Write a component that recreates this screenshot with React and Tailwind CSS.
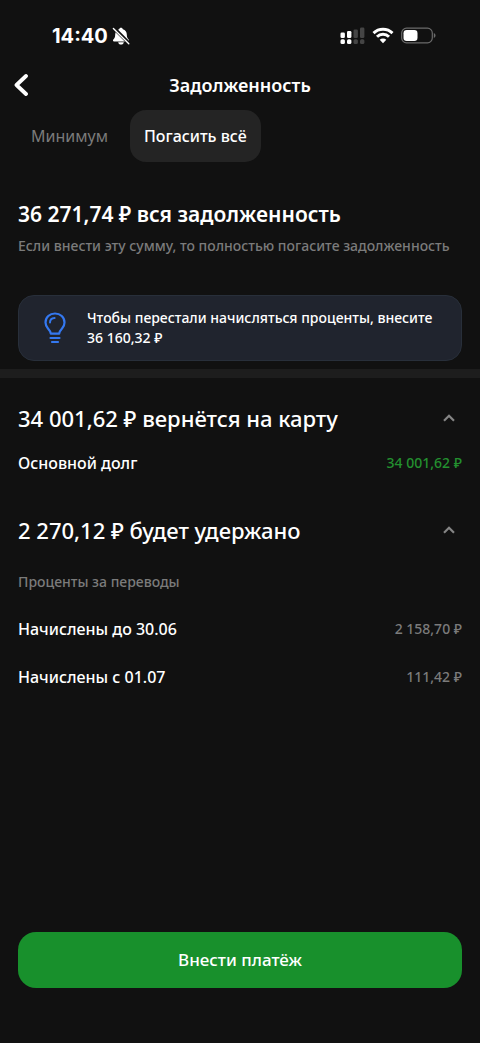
import { useState } from "react";

function Bell() {
  return (
    <svg width="18" height="18" viewBox="0 0 18 18" aria-hidden="true">
      <path d="M9 .8c-1 0-1.700.6-1.900 1.500C4.600 3.100 3.200 5.100 3.200 7.600c0 3-.9 3.900-1.900 5-.7.8-.3 1.900.7 1.900h14c1 0 1.400-1.100.7-1.900-1-1.100-1.900-2-1.900-5 0-2.500-1.400-4.500-3.900-5.300C10.700 1.400 10 .8 9 .8z" fill="#fff" />
      <path d="M6.200 15.200h5.600c-.2 1.400-1.400 2.300-2.800 2.300s-2.600-.9-2.800-2.300z" fill="#fff" />
      <path d="M2 1.200 17 16.200" stroke="#111" strokeWidth="3.600" />
      <path d="M1.400 1.400 16.800 16.800" stroke="#fff" strokeWidth="1.400" strokeLinecap="round" />
    </svg>
  );
}

function Signal() {
  return (
    <svg width="25" height="18" viewBox="0 0 25 18" aria-hidden="true">
      <g fill="#fff">
        <rect x="0.500" y="5.500" width="4.400" height="5.500" rx="1.300" />
        <rect x="7" y="4" width="4.400" height="7" rx="1.300" />
        <rect x="0.500" y="12.300" width="4.400" height="4.700" rx="1.500" />
        <rect x="7" y="12.300" width="4.400" height="4.700" rx="1.500" />
      </g>
      <g fill="#454545">
        <rect x="13.500" y="2.500" width="4.400" height="8.500" rx="1.300" />
        <rect x="20" y="0.500" width="4.400" height="10.500" rx="1.300" />
        <rect x="13.500" y="12.300" width="4.400" height="4.700" rx="1.500" />
        <rect x="20" y="12.300" width="4.400" height="4.700" rx="1.500" />
      </g>
    </svg>
  );
}

function Wifi() {
  return (
    <svg width="22" height="18" viewBox="0 0 22 18" aria-hidden="true">
      <g fill="none" stroke="#fff" strokeWidth="2.900">
        <path d="M1.500 6.100a13.500 13.500 0 0 1 19 0" />
        <path d="M5 9.800a8.500 8.500 0 0 1 12 0" />
      </g>
      <path d="M7.700 12.800a4.700 4.700 0 0 1 6.600 0L11 16.200z" fill="#fff" />
    </svg>
  );
}

function Battery() {
  return (
    <svg width="35" height="18" viewBox="0 0 35 18" aria-hidden="true">
      <rect x="0.700" y="1.200" width="30.600" height="14.600" rx="4.800" fill="none" stroke="#6b6b6b" strokeWidth="1.200" />
      <rect x="2.500" y="3" width="14" height="11" rx="3.200" fill="#fff" />
      <path d="M32.800 6c1.100.4 1.700 1.400 1.700 2.500s-.6 2.100-1.700 2.500z" fill="#6b6b6b" />
    </svg>
  );
}

function Bulb() {
  return (
    <svg width="22" height="32" viewBox="0 0 22 32" fill="none" stroke="#3478f0" strokeLinecap="round" strokeLinejoin="round" aria-hidden="true">
      <path d="M6.800 21.600c-.3-2.300-1.500-3.700-3-5.400A9.400 9.400 0 0 1 1.500 10.400C1.500 5.300 5.700 1.500 11 1.500s9.500 3.800 9.500 8.900c0 2.300-.9 4.200-2.300 5.800-1.500 1.700-2.700 3.100-3 5.400z" strokeWidth="2.200" />
      <path d="M6 10.600C6 8 7.800 6.200 10.600 6" strokeWidth="2" />
      <path d="M6.500 26h9M8 30h6" strokeWidth="2.200" />
    </svg>
  );
}

function Section({ title, children }) {
  const [open, setOpen] = useState(true);
  return (
    <section>
      <h2>
        <button
          type="button"
          aria-expanded={open}
          onClick={() => setOpen(!open)}
          className="flex h-8 w-full items-center justify-between pr-[7px] text-left text-[22px] font-medium"
        >
          {title}
          <svg width="12" height="12" viewBox="0 0 12 12" className={open ? "" : "rotate-180"} aria-hidden="true">
            <path d="M1 8.700 6 3.700l5 5" fill="none" stroke="#858585" strokeWidth="2.200" />
          </svg>
        </button>
      </h2>
      {open && children}
    </section>
  );
}

function Row({ label, value, green }) {
  return (
    <div className="flex h-12 items-center justify-between">
      <dt className="text-base font-medium">{label}</dt>
      <dd className={green ? "text-sm font-medium text-[#23902f]" : "text-sm font-medium text-[#7b7b7b]"}>{value}</dd>
    </div>
  );
}

export default function App() {
  const [tab, setTab] = useState("all");
  const tabClass = (id) =>
    tab === id
      ? "h-[52px] rounded-2xl bg-[#242424] px-[14px] text-base font-medium text-white"
      : "h-[52px] rounded-2xl px-[13px] text-base text-[#7b7b7b]";

  return (
    <div className="flex min-h-screen flex-col bg-[#111] font-['Noto_Sans',sans-serif] text-white">
      <div className="flex h-[69px] items-center justify-between pt-[3px] pr-11 pl-[52px]">
        <div className="flex items-center gap-1">
          <time className="font-['Inter',sans-serif] text-xl font-bold">14:40</time>
          <Bell />
        </div>
        <div className="flex items-center gap-[7px]">
          <Signal />
          <Wifi />
          <Battery />
        </div>
      </div>

      <header className="grid h-[41px] grid-cols-[40px_1fr_40px] items-start">
        <button type="button" aria-label="Назад" className="flex h-8 items-center pl-[14px]">
          <svg width="14" height="22" viewBox="0 0 14 22" aria-hidden="true">
            <path d="M12 2 2.500 11l9.500 9" fill="none" stroke="#fff" strokeWidth="3.800" strokeLinecap="round" strokeLinejoin="round" />
          </svg>
        </button>
        <h1 className="text-center text-lg leading-8 font-semibold">Задолженность</h1>
      </header>

      <div role="tablist" className="flex gap-[9px] px-[18px]">
        <button type="button" role="tab" aria-selected={tab === "min"} onClick={() => setTab("min")} className={tabClass("min")}>
          Минимум
        </button>
        <button type="button" role="tab" aria-selected={tab === "all"} onClick={() => setTab("all")} className={tabClass("all")}>
          Погасить всё
        </button>
      </div>

      <main className="flex grow flex-col">
        <div className="px-[18px] pt-9">
          <h2 className="text-[21px] leading-8 font-semibold">36 271,74 ₽ вся задолженность</h2>
          <p className="pt-1 text-sm leading-6 font-medium text-[#7b7b7b]">
            Если внести эту сумму, то полностью погасите задолженность
          </p>
          <div className="mt-[37px] flex items-center gap-[21px] rounded-2xl border border-[#282f3a] bg-[#20242e] py-3 pl-[25px]">
            <Bulb />
            <p className="text-sm leading-5 font-medium">
              Чтобы перестали начисляться проценты, внесите
              <br />
              36 160,32 ₽
            </p>
          </div>
        </div>

        <div className="mt-2 h-[9px] bg-[#1d1d1d]" />

        <div className="flex flex-col gap-[27px] px-[18px] pt-6">
          <Section title="34 001,62 ₽ вернётся на карту">
            <dl className="pt-[5px]">
              <Row label="Основной долг" value="34 001,62 ₽" green />
            </dl>
          </Section>
          <Section title="2 270,12 ₽ будет удержано">
            <h3 className="pt-6 text-sm leading-6 font-medium text-[#7b7b7b]">Проценты за переводы</h3>
            <dl className="pt-[11px]">
              <Row label="Начислены до 30.06" value="2 158,70 ₽" />
              <Row label="Начислены с 01.07" value="111,42 ₽" />
            </dl>
          </Section>
        </div>
      </main>

      <footer className="px-[18px] pb-[55px]">
        <button type="button" className="h-14 w-full rounded-[18px] bg-[#18902c] text-[17px] font-medium">
          Внести платёж
        </button>
      </footer>
    </div>
  );
}
